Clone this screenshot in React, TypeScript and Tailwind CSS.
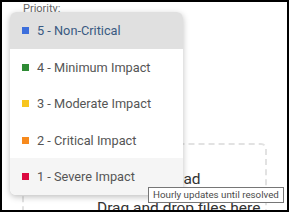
import React from 'react';

const options = [
  { label: '5 - Non-Critical', color: 'bg-[#3d6fdc]' },
  { label: '4 - Minimum Impact', color: 'bg-[#2e8b34]' },
  { label: '3 - Moderate Impact', color: 'bg-[#f7c51e]' },
  { label: '2 - Critical Impact', color: 'bg-[#f78a1d]' },
  { label: '1 - Severe Impact', color: 'bg-[#dc0a40]' },
];

export default function App() {
  return (
    <div className="w-[289px] h-[212px] border-2 border-black bg-white overflow-hidden relative font-['Roboto',sans-serif]">
      {/* Page behind the menu */}
      <div className="pl-[21px] pt-[1px]">
        <p className="m-0 text-[11px] leading-[12px] text-[#666]">Priority:</p>
      </div>
      <div className="ml-[20px] mt-[128px] w-[245px] h-[90px] border-2 border-dashed border-[#e2e2e2] rounded-md flex flex-col items-start pl-[73px] pt-[20px] text-[15.5px] leading-[29px] text-[#333] whitespace-nowrap">
        <span>Click to Upload</span>
        <span>Drag and drop files here</span>
      </div>

      {/* Open dropdown */}
      <ul className="absolute left-[8px] top-[10px] w-[173px] list-none m-0 p-0 bg-white rounded-md overflow-hidden shadow-[0_2px_6px_rgba(0,0,0,0.25)]">
        {options.map((o, i) => (
          <li
            key={o.label}
            className={`h-[36.5px] flex items-center pl-[12px] pt-[1px] gap-[8px] text-[12.75px] ${
              i === 0 ? 'bg-[#e0e0e0] text-[#3a5a82]' : i === 4 ? 'bg-[#f5f5f5] text-[#555]' : 'text-[#555]'
            }`}
          >
            <span className={`w-[7px] h-[7px] shrink-0 ${o.color}`} />
            <span>{o.label}</span>
          </li>
        ))}
      </ul>

      {/* Tooltip */}
      <div className="absolute left-[146px] top-[185px] h-[16px] px-[4px] border border-[#767676] bg-white flex items-center text-[9.75px] text-[#4a4a4a] whitespace-nowrap">
        Hourly updates until resolved
      </div>
    </div>
  );
}
